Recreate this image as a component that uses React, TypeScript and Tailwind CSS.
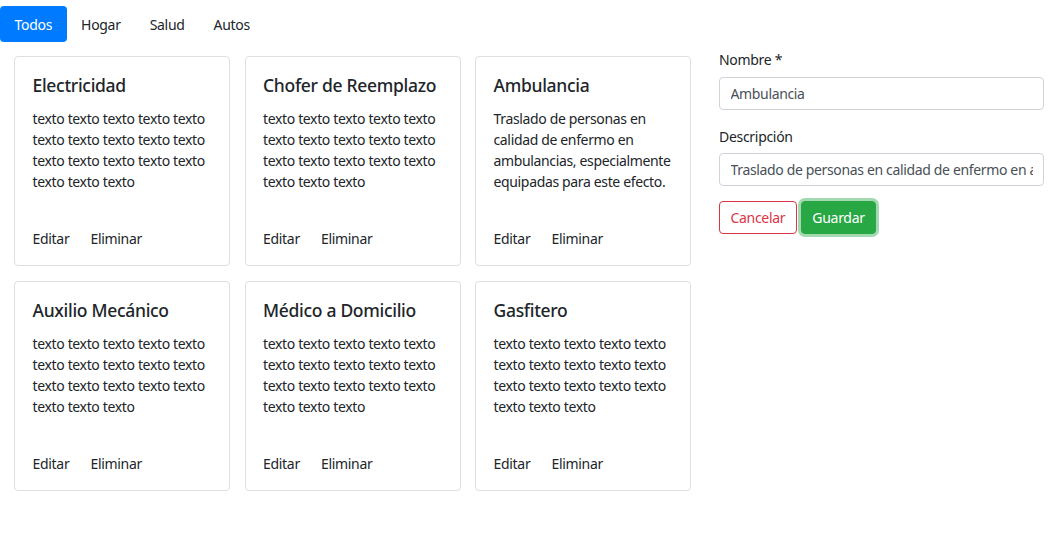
const filler =
  "texto texto texto texto texto texto texto texto texto texto texto texto texto texto texto texto texto texto";

const services = [
  { title: "Electricidad", text: filler },
  { title: "Chofer de Reemplazo", text: filler },
  {
    title: "Ambulancia",
    text: "Traslado de personas en calidad de enfermo en ambulancias, especialmente equipadas para este efecto.",
  },
  { title: "Auxilio Mecánico", text: filler },
  { title: "Médico a Domicilio", text: filler },
  { title: "Gasfitero", text: filler },
];

const tabs = ["Todos", "Hogar", "Salud", "Autos"];

const ServiceCard = ({ title, text }: { title: string; text: string }) => (
  <div className="flex h-[210px] flex-col rounded-[4px] border border-[#dfdfdf] bg-white px-[17.5px] pt-[18px] pb-[16px]">
    <h5 className="mb-[12px] text-[17.5px] leading-[21px] font-medium tracking-[-0.3px] text-[#212529]">
      {title}
    </h5>
    <p className="text-[14px] leading-[21px] tracking-[-0.35px] text-[#212529]">
      {text}
    </p>
    <div className="mt-auto flex gap-[21px] text-[14px] leading-[21px] text-[#212529]">
      <a href="#">Editar</a>
      <a href="#">Eliminar</a>
    </div>
  </div>
);

export default function App() {
  return (
    <div
      className="min-h-screen bg-white text-[14px] leading-[21px] tracking-[-0.3px] text-[#212529]"
      style={{ fontFamily: '"Segoe UI", "Noto Sans", sans-serif' }}
    >
      {/* Nav pills */}
      <nav className="flex pt-[6px]">
        {tabs.map((t, i) => (
          <a
            key={t}
            href="#"
            className={
              i === 0
                ? "rounded-[4px] bg-[#007bff] px-[14.5px] pt-[8px] pb-[7px] text-white"
                : "px-[14.5px] pt-[8px] pb-[7px] text-[#212529]"
            }
          >
            {t}
          </a>
        ))}
      </nav>

      <div className="flex">
        {/* Cards */}
        <div className="mt-[14px] grid grid-cols-[216px_216px_216px] gap-x-[14.5px] gap-y-[15px] pl-[14px]">
          {services.map((s) => (
            <ServiceCard key={s.title} title={s.title} text={s.text} />
          ))}
        </div>

        {/* Form */}
        <form className="mt-[7px] ml-[28px] w-[325px]">
          <div className="mb-[16px]">
            <label className="mb-[7px] block">Nombre *</label>
            <input
              readOnly
              value="Ambulancia"
              className="block h-[33px] w-full rounded-[4px] border border-[#ced4da] px-[10.5px] tracking-[-0.35px] text-[#495057] outline-none"
            />
          </div>
          <div className="mb-[15px]">
            <label className="mb-[6px] block">Descripción</label>
            <input
              readOnly
              value="Traslado de personas en calidad de enfermo en ambulancias, especialmente equipadas para este efecto."
              className="block h-[33px] w-full rounded-[4px] border border-[#ced4da] px-[10.5px] tracking-[-0.35px] text-[#495057] outline-none"
            />
          </div>
          <div className="flex gap-[4px]">
            <button
              type="button"
              className="h-[33px] rounded-[4px] border border-[#dc3545] px-[10.5px] tracking-[-0.3px] text-[#dc3545]"
            >
              Cancelar
            </button>
            <button
              type="button"
              className="h-[33px] rounded-[4px] border border-[#28a745] bg-[#28a745] px-[10.5px] tracking-[-0.3px] text-white shadow-[0_0_0_3px_rgba(72,180,97,0.5)]"
            >
              Guardar
            </button>
          </div>
        </form>
      </div>
    </div>
  );
}
